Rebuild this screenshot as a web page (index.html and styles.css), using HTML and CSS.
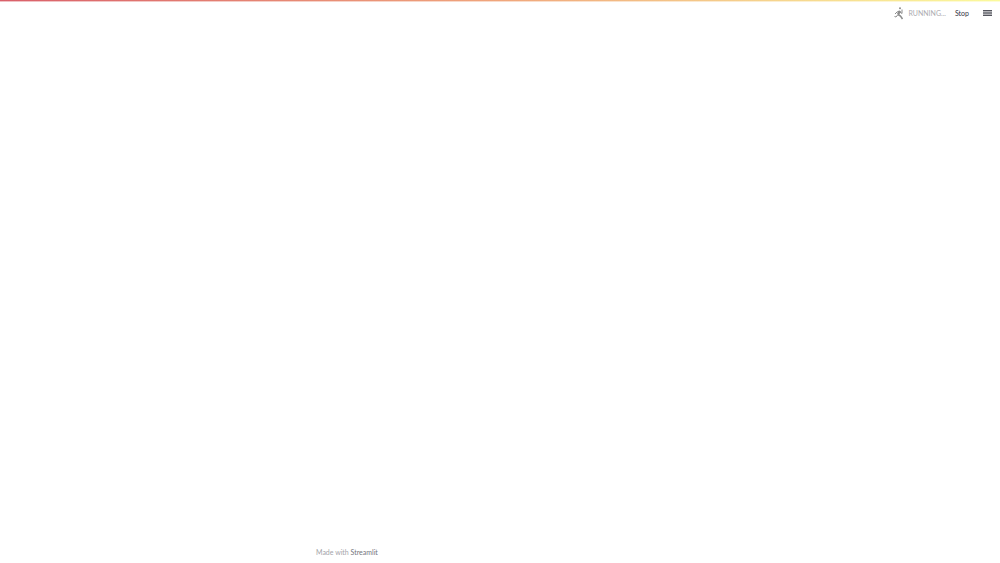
FILE: index.html
```
<!DOCTYPE html>
<html lang="en">
<head>
<meta charset="utf-8">
<meta name="viewport" content="width=device-width, initial-scale=1">
<title>Streamlit</title>
<link rel="stylesheet" href="styles.css">
</head>
<body>
<div class="decoration"></div>
<header class="toolbar">
  <div class="status">
    <svg class="runner" viewBox="0 0 20 26" aria-hidden="true">
      <circle cx="12" cy="2.5" r="2"/>
      <path class="torso" d="M12 8 8 15"/>
      <path d="M11 8 6 10l-4 4M12 10l4 3V5M8 15l-4 5-3-1"/>
      <path class="leg" d="M8 15l5 3 4 6"/>
    </svg>
    <span class="status-text">Running...</span>
    <button class="stop" type="button">Stop</button>
  </div>
  <button class="menu" type="button" aria-label="Main menu">
    <svg class="menu-icon" viewBox="0 0 9 6" aria-hidden="true">
      <path class="shade" d="M0 3h9"/>
      <path d="M0 .5h9M0 3h9M0 5.5h9"/>
    </svg>
  </button>
</header>
<main class="content"></main>
<footer class="footer">Made with <a class="brand" href="#">Streamlit</a></footer>
</body>
</html>
```
FILE: styles.css
```
* {
  box-sizing: border-box;
}

body {
  display: flex;
  flex-direction: column;
  min-height: 100vh;
  margin: 0;
  background: #fff;
  color: #31333f;
  font: 7px/12px Lato, "Noto Sans CJK SC", sans-serif;
}

.decoration {
  height: 2px;
  background:
    linear-gradient(transparent 1px, rgba(255, 255, 255, 0.6) 1px),
    linear-gradient(90deg, #d9606a, #f0a67c 50%, #fbfa9c);
}

.toolbar {
  display: flex;
  align-items: center;
  justify-content: flex-end;
  height: 22px;
  padding-right: 8px;
  gap: 14px;
}

.status {
  display: flex;
  align-items: center;
}

.runner {
  width: 10px;
  height: 13px;
  margin-right: 4px;
  fill: #8c8c8c;
}

.runner path {
  fill: none;
  stroke: #8c8c8c;
  stroke-width: 2;
}

.runner .torso {
  stroke-width: 5;
}

.runner .leg {
  stroke-width: 3;
}

.status-text {
  color: #acacb1;
  text-transform: uppercase;
}

.stop,
.menu {
  padding: 0;
  border: 0;
  background: none;
  color: inherit;
  font: inherit;
  cursor: pointer;
}

.stop {
  margin-left: 9px;
}

.menu {
  display: flex;
}

.menu-icon {
  width: 9px;
  height: 6px;
  fill: none;
  stroke: #55565e;
}

.menu-icon .shade {
  stroke: #b4b4b8;
  stroke-width: 6;
}

.content {
  flex: 1;
}

.footer {
  width: 100%;
  max-width: 368px;
  margin: 0 auto;
  padding-bottom: 5px;
  color: #a4a4a9;
}

.brand {
  color: #74757c;
  text-decoration: none;
}
```
